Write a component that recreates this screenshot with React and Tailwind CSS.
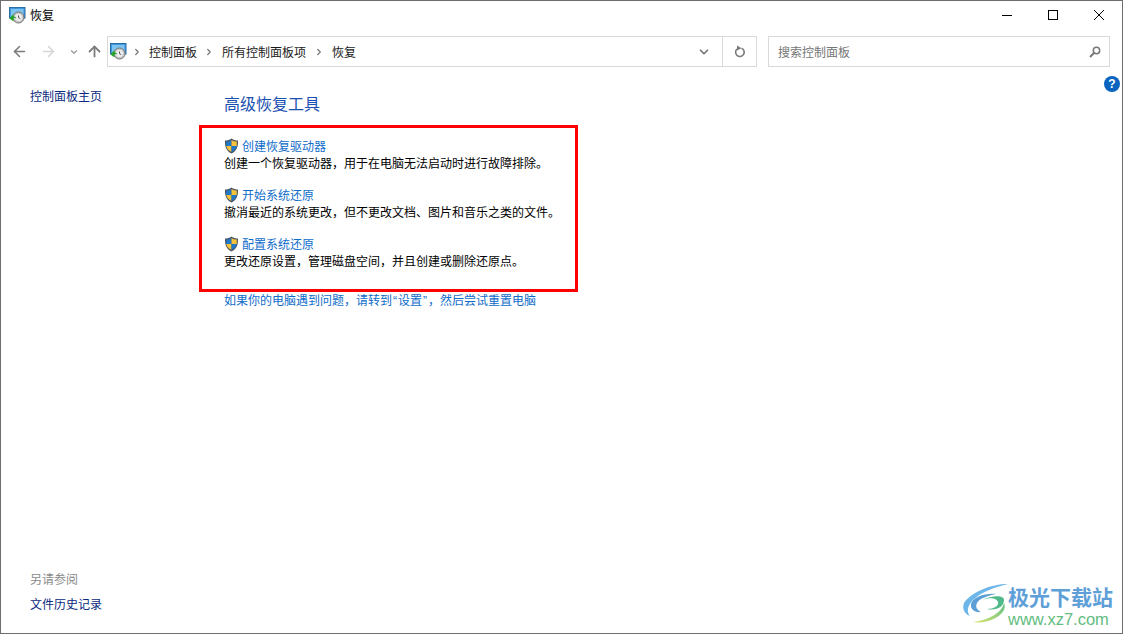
import { ArrowLeft, ArrowRight, ArrowUp, ChevronDown, ChevronRight } from 'lucide-react';

const cjk = { fontFamily: '"Noto Sans CJK SC", "Liberation Sans", sans-serif' };
const latin = { fontFamily: '"Liberation Sans", sans-serif' };

const RecoveryIcon = () => (
  <svg width="17" height="17" viewBox="0 0 17 17" className="shrink-0">
    <rect x="0.5" y="0.500" width="15.500" height="10.500" fill="#3f97dc" stroke="#2b6fa5" />
    <rect x="2" y="2" width="12.500" height="7.500" fill="#7fc4f0" />
    <circle cx="9.500" cy="10.500" r="5.500" fill="#c9c9c9" stroke="#6f6f6f" />
    <circle cx="9.500" cy="10.500" r="3.400" fill="#eeeeee" />
    <path d="M9.500 8.500v2.200l1.700.9" fill="none" stroke="#555" />
    <path d="M0.500 11.500l4-4.500v2.500c1.500 0 2.500.8 3 2-1-.5-2-.6-3-.4v3.400z" fill="#25a525" />
  </svg>
);

const Shield = () => (
  <svg width="15" height="16" viewBox="0 0 15 16" className="shrink-0">
    <path d="M7.500.5c2 1.500 4 2 6.500 2 .2 6-1 10.500-6.500 13C2 13 .8 8.500 1 2.500c2.500 0 4.500-.5 6.500-2z" fill="#4b5560" />
    <path d="M7.500 2v6H2.300c-.1-1.500-.1-3-.1-4.500 2 0 3.700-.5 5.300-1.500z" fill="#1f78c8" />
    <path d="M7.500 2c1.600 1 3.300 1.500 5.300 1.500 0 1.500 0 3-.1 4.500H7.500z" fill="#f5c33b" />
    <path d="M2.300 8h5.200v6C4.300 12.500 2.700 10.500 2.300 8z" fill="#f5c33b" />
    <path d="M7.500 8h5.200c-.4 2.500-2 4.500-5.200 6z" fill="#1f78c8" />
  </svg>
);

const RefreshIcon = () => (
  <svg width="12" height="13" viewBox="0 0 12 13" className="text-[#7a7a7a]">
    <path d="M7.500 3.200A4.300 4.300 0 1 1 3 4" fill="none" stroke="currentColor" strokeWidth="1.600" />
    <path d="M3 0.500l4.500 2.700L3 5.500z" fill="currentColor" />
  </svg>
);

const SearchIcon = () => (
  <svg width="12" height="12" viewBox="0 0 12 12" className="ml-auto">
    <circle cx="7.500" cy="4.500" r="3.200" fill="none" stroke="#777" strokeWidth="1.500" />
    <path d="M5.200 6.800L1 11" stroke="#777" strokeWidth="2" />
  </svg>
);

const Logo = () => (
  <svg width="45" height="39" viewBox="0 0 45 39" className="shrink-0">
    <defs>
      <linearGradient id="tail" x1="1" y1="0" x2="0" y2="1">
        <stop offset="0" stopColor="#5fc08c" />
        <stop offset="1" stopColor="#d8e36a" />
      </linearGradient>
    </defs>
    <path d="M45 0C28 0 8 8 1 19c-2 5 0 11 6 13-4-5-2-11 3-16C18 8 32 3 45 0z" fill="#6db6e8" />
    <path d="M33 10C22 9 10 13 8 20c-1 5 4 9 10 8-4-2-6-5-4-9 3-5 10-7 19-9z" fill="#5b9fd6" />
    <path d="M19 16c7-3 15-2 16 2 1 4-4 7-11 7 9 2 17-2 17-9 0-5-11-5-22 0z" fill="#4fb98a" />
    <path d="M41 19c-2 9-14 17-31 19 12 2 26-3 31-12 1-3 1-5 0-7z" fill="url(#tail)" />
  </svg>
);

const Tool = ({ title, desc }) => (
  <div className="flex flex-col">
    <div className="flex items-center gap-[3px] h-[18px] text-[#0f6cc9]">
      <Shield />
      <a>{title}</a>
    </div>
    <p className="-mt-px h-[18px] leading-[18px] text-black">{desc}</p>
  </div>
);

export default function App() {
  return (
    <div style={cjk} className="w-[1123px] h-[634px] relative overflow-hidden bg-white border border-[#6e6e6e] flex flex-col text-xs text-[#1a1a1a]">
      {/* title bar */}
      <div className="h-[28px] flex items-center shrink-0">
        <div className="ml-2 mr-[4px]"><RecoveryIcon /></div>
        <span className="text-black">恢复</span>
        <div className="ml-auto flex items-center text-black">
          <div className="w-[46px] flex justify-center"><div className="w-[10px] h-px bg-black" /></div>
          <div className="w-[46px] flex justify-center"><div className="w-[10px] h-[10px] border border-black" /></div>
          <div className="w-[46px] flex justify-center">
            <svg width="10" height="10" viewBox="0 0 10 10"><path d="M0 0l10 10M10 0L0 10" stroke="#000" strokeWidth="1" /></svg>
          </div>
        </div>
      </div>

      {/* nav row */}
      <div className="h-[31px] mt-[7px] flex items-stretch shrink-0">
        <div className="w-[106px] flex items-center pl-[10px]">
          <ArrowLeft size={17} strokeWidth={2.200} className="text-[#7a7a7a]" />
          <ArrowRight size={17} strokeWidth={2.200} className="text-[#d6d6d6] ml-[12px]" />
          <ChevronDown size={10} strokeWidth={3} className="text-[#9a9a9a] ml-[12px]" />
          <ArrowUp size={17} strokeWidth={2.500} className="text-[#7a7a7a] ml-[7px]" />
        </div>
        <div className="w-[650px] flex items-center border border-[#d9d9d9]">
          <div className="ml-[2px]"><RecoveryIcon /></div>
          <ChevronRight size={10} strokeWidth={3} className="text-[#777] ml-[5px]" />
          <span className="ml-[7px]">控制面板</span>
          <ChevronRight size={10} strokeWidth={3} className="text-[#777] ml-[7px]" />
          <span className="ml-2">所有控制面板项</span>
          <ChevronRight size={10} strokeWidth={3} className="text-[#777] ml-2" />
          <span className="ml-2">恢复</span>
          <ChevronDown size={14} strokeWidth={3} className="text-[#777] ml-auto mr-[11px]" />
          <div className="w-[34px] self-stretch border-l border-[#d9d9d9] flex items-center justify-center">
            <RefreshIcon />
          </div>
        </div>
        <div className="w-[342px] ml-[11px] flex items-center border border-[#d9d9d9] pl-[9px] pr-2 text-[#767676]">
          <span>搜索控制面板</span>
          <SearchIcon />
        </div>
      </div>

      {/* body */}
      <div className="flex-1 flex relative">
        {/* left nav */}
        <aside className="w-[223px] shrink-0 flex flex-col pl-[29px] pt-[20px] pb-[20px]">
          <a className="h-[18px] leading-[18px] text-[#0a2a80]">控制面板主页</a>
          <div className="mt-auto h-[18px] leading-[18px] text-[#8a8a8a]">另请参阅</div>
          <a className="mt-[7px] h-[18px] leading-[18px] text-[#0a2a80]">文件历史记录</a>
        </aside>

        {/* content */}
        <main className="flex-1 flex flex-col pt-[24px]">
          <h1 className="text-base leading-6 text-[#1a50b0]">高级恢复工具</h1>
          <div className="w-[379px] h-[167px] -ml-[25px] mt-[10px] border-[3px] border-[#ff0000] pl-[22px] pt-[9px] flex flex-col gap-[14px]">
            <Tool title="创建恢复驱动器" desc="创建一个恢复驱动器，用于在电脑无法启动时进行故障排除。" />
            <Tool title="开始系统还原" desc="撤消最近的系统更改，但不更改文档、图片和音乐之类的文件。" />
            <Tool title="配置系统还原" desc="更改还原设置，管理磁盘空间，并且创建或删除还原点。" />
          </div>
          <a className="-mt-px h-[18px] leading-[18px] text-[#0f6cc9]">
            如果你的电脑遇到问题，请转到<span style={latin} className="px-px">“</span>设置<span style={latin} className="px-px">”</span>，然后尝试重置电脑
          </a>
        </main>

        {/* help button */}
        <div style={latin} className="absolute right-[2px] top-[9px] w-4 h-4 rounded-full bg-[#0a64c0] text-white flex items-center justify-center text-[12px] font-bold">?</div>
      </div>

      {/* watermark */}
      <div className="absolute left-[962px] top-[583px] flex items-start">
        <Logo />
        <div className="flex flex-col items-start gap-[2px]">
          <span className="text-[21px] leading-[24px] font-bold text-[#5f9fd8]">极光下载站</span>
          <span style={latin} className="text-[16.5px] leading-[18px] text-[#62bd7f]">www.xz7.com</span>
        </div>
      </div>
    </div>
  );
}
